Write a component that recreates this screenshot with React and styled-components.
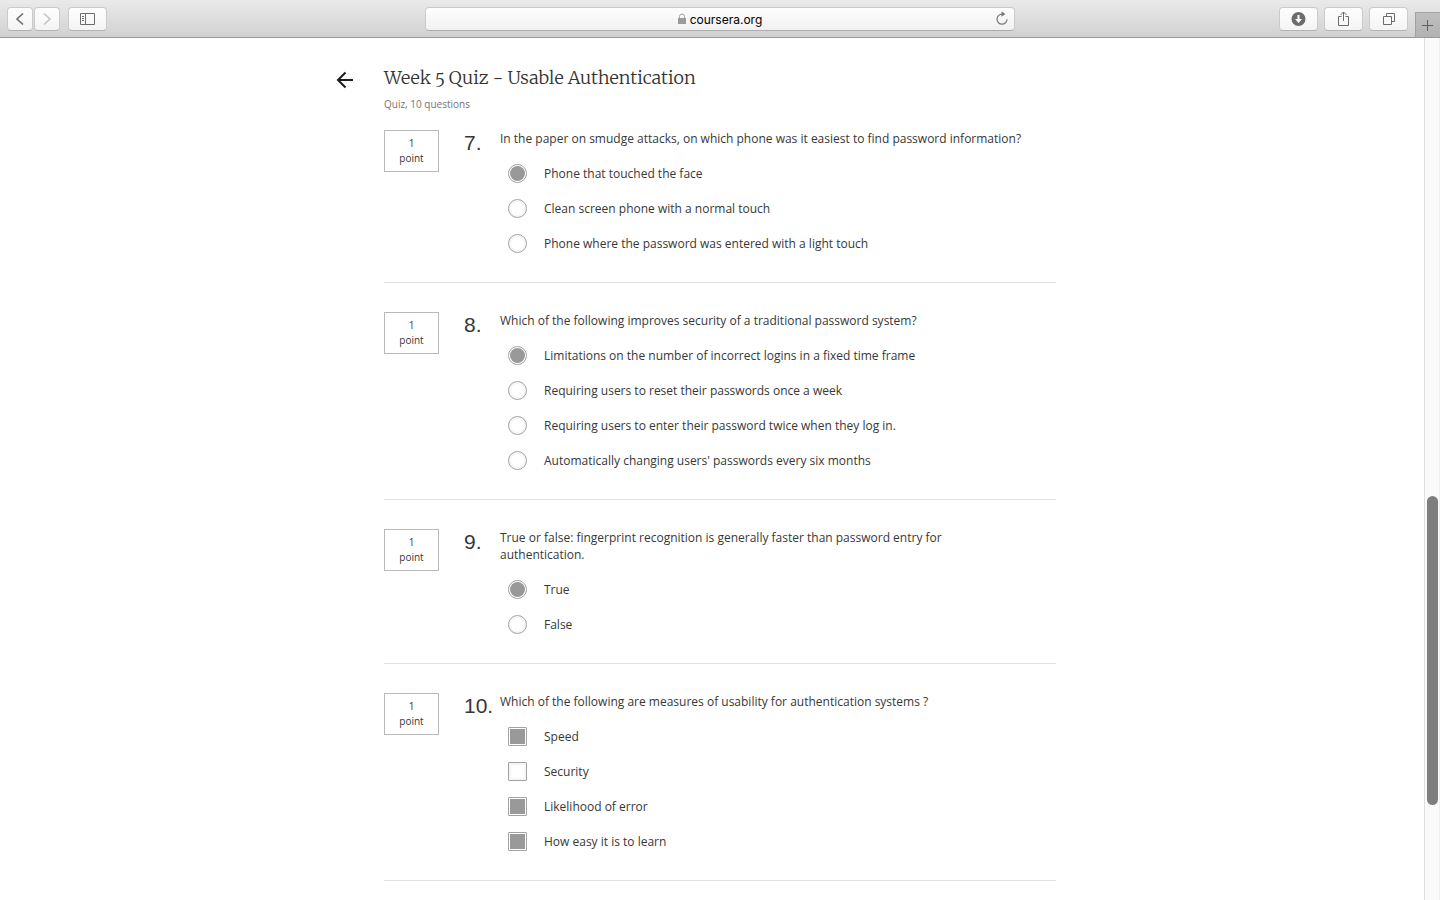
import React from "react";
import styled, { createGlobalStyle } from "styled-components";

const GlobalStyle = createGlobalStyle`
  *, *::before, *::after { box-sizing: border-box; }
  body {
    margin: 0;
    background: #fff;
    color: #373737;
    font-family: "Open Sans", "Noto Sans", sans-serif;
    font-size: 12px;
    line-height: 17px;
  }
  button, input { font: inherit; color: inherit; margin: 0; }
`;

const Window = styled.div`
  display: flex;
  flex-direction: column;
  height: 100vh;
  overflow: hidden;
`;

const Toolbar = styled.header`
  display: grid;
  grid-template-columns: 1fr minmax(0, 590px) 1fr;
  align-items: start;
  flex: none;
  height: 38px;
  border-bottom: 1px solid #999;
  background: linear-gradient(#eaeaea, #d1d1d1);
`;

const ToolGroup = styled.div`
  display: flex;
  justify-content: ${(p) => (p.$end ? "flex-end" : "flex-start")};
  gap: 6px;
  padding: ${(p) => (p.$end ? "0" : "7px 7px 0")};
`;

const Pair = styled.div`
  display: flex;
  gap: 1px;
  margin-right: 2px;
`;

const ToolButton = styled.button`
  display: flex;
  align-items: center;
  justify-content: center;
  width: ${(p) => (p.$narrow ? "26px" : "39px")};
  height: 24px;
  margin-top: ${(p) => (p.$end ? "7px" : "0")};
  padding: 0;
  border: 1px solid #cbcbcb;
  border-bottom-color: #b3b3b3;
  border-radius: 4px;
  background: linear-gradient(#fefefe, #f4f4f4);
  color: ${(p) => (p.disabled ? "#c3c3c3" : "#6c6c6c")};
`;

const NewTab = styled.button`
  display: flex;
  align-items: center;
  justify-content: center;
  width: 25px;
  height: 25px;
  margin: 12px 0 0 1px;
  padding: 0;
  border: 0;
  border-top: 1px solid #a5a5a5;
  border-left: 1px solid #a0a0a0;
  background: linear-gradient(#bebebe, #b2b2b2);
  color: #606060;
`;

const AddressBar = styled.form`
  display: grid;
  grid-template-columns: 1fr auto 1fr;
  align-items: center;
  height: 24px;
  margin-top: 7px;
  border: 1px solid #cbcbcb;
  border-bottom-color: #acacac;
  border-radius: 4px;
  background: linear-gradient(#fefefe, #f1f1f1);
`;

const Address = styled.label`
  grid-column: 2;
  display: flex;
  align-items: center;
  gap: 4px;
`;

const AddressInput = styled.input`
  field-sizing: content;
  height: 20px;
  padding: 0;
  border: 0;
  outline: 0;
  background: none;
  color: #000;
  font-family: Inter, sans-serif;
  font-size: 12px;
`;

const Reload = styled.button`
  justify-self: end;
  display: flex;
  margin-right: 4px;
  padding: 0;
  border: 0;
  background: none;
  color: #777;
`;

const Viewport = styled.div`
  display: flex;
  flex: 1;
  min-height: 0;
`;

const Main = styled.main`
  flex: 1;
  min-width: 0;
  padding: 28px 48px 0 64px;
  overflow: hidden;
`;

const Column = styled.div`
  max-width: 672px;
  margin: 0 auto;
`;

const QuizHeader = styled.div`
  display: flex;
  gap: 30px;
  margin: 0 0 18px -48px;
`;

const Back = styled.button`
  display: flex;
  align-items: center;
  width: 18px;
  height: 27px;
  padding: 0;
  border: 0;
  background: none;
  color: #1c1c1c;
`;

const Title = styled.h1`
  margin: 0;
  color: #333;
  font-family: Merriweather, "Liberation Serif", serif;
  font-size: 18px;
  font-weight: 300;
  font-variant-numeric: oldstyle-nums;
  line-height: 24px;
`;

const Subtitle = styled.p`
  margin: 6px 0 0;
  color: #757575;
  font-size: 10px;
  line-height: 16px;
`;

const Question = styled.section`
  display: flex;
  align-items: flex-start;
  margin-bottom: 29px;
  padding-bottom: 21px;
  border-bottom: 1px solid #e1e1e1;
`;

const Points = styled.div`
  flex: none;
  width: 55px;
  height: 42px;
  margin-right: 25px;
  padding-top: 5px;
  border: 1px solid #b9b9b9;
  font-size: 10px;
  line-height: 15px;
  text-align: center;
`;

const Number = styled.div`
  flex: none;
  width: 36px;
  font-family: "Liberation Sans", sans-serif;
  font-size: 21px;
  line-height: 26px;
  white-space: nowrap;
`;

const Answers = styled.fieldset`
  flex: 1;
  min-width: 0;
  max-width: 524px;
  margin: 0;
  padding: 0;
  border: 0;
`;

const Prompt = styled.legend`
  margin-bottom: 9px;
  padding: 0;
`;

const Option = styled.label`
  display: flex;
  align-items: center;
  gap: 17px;
  height: 35px;
  padding-left: 8px;
`;

const Choice = styled.input`
  appearance: none;
  flex: none;
  width: 19px;
  height: 19px;
  border: 1px solid #a2a2a2;
  border-radius: ${(p) => (p.type === "radio" ? "50%" : "1px")};
  background: #fff;
  box-shadow: inset 0 0 0 2px #f6f6f6;

  &:checked {
    padding: 1px;
    background: #999 content-box;
    box-shadow: none;
  }
`;

const ScrollTrack = styled.div`
  flex: none;
  width: 16px;
  padding: 0 2px;
  border-left: 1px solid #dedede;
  border-right: 1px solid #efefef;
  background: #fafafa;
  display: grid;
  grid-template-rows: 458fr 309fr 95fr;
`;

const ScrollThumb = styled.div`
  grid-row: 2;
  width: 11px;
  border-radius: 6px;
  background: #7e7e7e;
`;

const Icon = ({ w = 16, h = 16, children }) => (
  <svg
    width={w}
    height={h}
    viewBox={`0 0 ${w} ${h}`}
    fill="none"
    stroke="currentColor"
    strokeWidth="1"
    aria-hidden="true"
  >
    {children}
  </svg>
);

const questions = [
  {
    n: 7,
    type: "radio",
    text: "In the paper on smudge attacks, on which phone was it easiest to find password information?",
    options: [
      ["Phone that touched the face", true],
      ["Clean screen phone with a normal touch", false],
      ["Phone where the password was entered with a light touch", false],
    ],
  },
  {
    n: 8,
    type: "radio",
    text: "Which of the following improves security of a traditional password system?",
    options: [
      ["Limitations on the number of incorrect logins in a fixed time frame", true],
      ["Requiring users to reset their passwords once a week", false],
      ["Requiring users to enter their password twice when they log in.", false],
      ["Automatically changing users' passwords every six months", false],
    ],
  },
  {
    n: 9,
    type: "radio",
    text: "True or false: fingerprint recognition is generally faster than password entry for authentication.",
    options: [
      ["True", true],
      ["False", false],
    ],
  },
  {
    n: 10,
    type: "checkbox",
    text: "Which of the following are measures of usability for authentication systems ?",
    options: [
      ["Speed", true],
      ["Security", false],
      ["Likelihood of error", true],
      ["How easy it is to learn", true],
    ],
  },
];

function BrowserToolbar() {
  return (
    <Toolbar>
      <ToolGroup>
        <Pair>
          <ToolButton type="button" $narrow aria-label="Back">
            <Icon>
              <path d="M11 2.5 5 8l6 5.5" strokeWidth="1.6" />
            </Icon>
          </ToolButton>
          <ToolButton type="button" $narrow disabled aria-label="Forward">
            <Icon>
              <path d="M5 2.5 11 8l-6 5.5" strokeWidth="1.6" />
            </Icon>
          </ToolButton>
        </Pair>
        <ToolButton type="button" aria-label="Show sidebar">
          <Icon w={15}>
            <path d="M.5 2.5h14v11H.5zM5.5 2.5v11M2 5.5h2M2 7.5h2M2 9.5h2" />
          </Icon>
        </ToolButton>
      </ToolGroup>
      <AddressBar onSubmit={(e) => e.preventDefault()}>
        <Address>
          <Icon w={8} h={12}>
            <path d="M1.5 6V3.5a2.5 2.5 0 0 1 5 0V6" stroke="#a0a0a0" />
            <path d="M0 5h8v6H0z" fill="#9b9b9b" stroke="none" />
          </Icon>
          <AddressInput aria-label="Address" defaultValue="coursera.org" />
        </Address>
        <Reload type="button" aria-label="Reload">
          <Icon>
            <path d="M8.5 3.2H8a5 5 0 1 0 5 5" strokeWidth="1.2" />
            <path d="M7.5.5 11.5 3 7.5 5.8z" fill="currentColor" stroke="none" />
          </Icon>
        </Reload>
      </AddressBar>
      <ToolGroup $end>
        <ToolButton type="button" $end aria-label="Downloads">
          <Icon w={15}>
            <circle cx="7.5" cy="8" r="7" fill="currentColor" stroke="none" />
            <path d="M7.5 4v5" stroke="#fff" strokeWidth="2" />
            <path d="M4 8h7l-3.5 4z" fill="#fff" stroke="none" />
          </Icon>
        </ToolButton>
        <ToolButton type="button" $end aria-label="Share">
          <Icon w={15}>
            <path d="M5.5 5.5h-3v9h10v-9h-3M7.5 10V1M4.5 4l3-3 3 3" />
          </Icon>
        </ToolButton>
        <ToolButton type="button" $end aria-label="Show all tabs">
          <Icon w={15}>
            <path d="M2.5 5.5h8v8h-8zM5.5 5.5v-3h8v8h-3" />
          </Icon>
        </ToolButton>
        <NewTab type="button" aria-label="New tab">
          <Icon w={12} h={12}>
            <path d="M5.5 1v11M0 6.5h11" />
          </Icon>
        </NewTab>
      </ToolGroup>
    </Toolbar>
  );
}

export default function App() {
  return (
    <Window>
      <GlobalStyle />
      <BrowserToolbar />
      <Viewport>
        <Main>
          <Column>
            <QuizHeader>
              <Back type="button" aria-label="Back to course">
                <Icon w={18} h={18}>
                  <path d="M17 9H2M9.5 1.5 2 9l7.5 7.5" strokeWidth="2" />
                </Icon>
              </Back>
              <div>
                <Title>Week 5 Quiz - Usable Authentication</Title>
                <Subtitle>Quiz, 10 questions</Subtitle>
              </div>
            </QuizHeader>
            {questions.map((q) => (
              <Question key={q.n}>
                <Points>
                  1<br />
                  point
                </Points>
                <Number>{q.n}.</Number>
                <Answers>
                  <Prompt>{q.text}</Prompt>
                  {q.options.map(([label, checked]) => (
                    <Option key={label}>
                      <Choice type={q.type} name={`question-${q.n}`} defaultChecked={checked} />
                      {label}
                    </Option>
                  ))}
                </Answers>
              </Question>
            ))}
          </Column>
        </Main>
        <ScrollTrack>
          <ScrollThumb />
        </ScrollTrack>
      </Viewport>
    </Window>
  );
}
